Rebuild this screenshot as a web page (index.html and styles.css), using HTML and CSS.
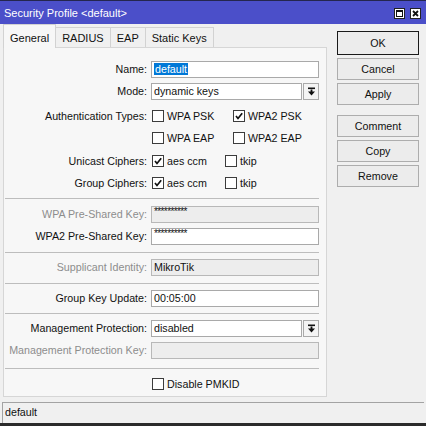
FILE: index.html
```html
<!DOCTYPE html>
<html>
<head>
<meta charset="utf-8">
<link rel="stylesheet" href="styles.css">
</head>
<body>
<div class="window">
  <div class="titlebar">
    <span class="title">Security Profile &lt;default&gt;</span>
    <div class="tb-buttons">
      <span class="tb-btn"><svg width="11" height="11" viewBox="0 0 11 11"><rect x="0.5" y="0.5" width="10" height="10" fill="#fff" stroke="#222"/><rect x="2.5" y="2.5" width="6" height="6" fill="none" stroke="#111"/><rect x="2" y="2" width="7" height="2" fill="#111"/></svg></span>
      <span class="tb-btn"><svg width="11" height="11" viewBox="0 0 11 11"><rect x="0.5" y="0.5" width="10" height="10" fill="#fff" stroke="#222"/><path d="M3 3 L8 8 M8 3 L3 8" stroke="#111" stroke-width="1.8"/></svg></span>
    </div>
  </div>
  <div class="main">
    <div class="left">
      <div class="tabs">
        <div class="tab active">General</div>
        <div class="tab">RADIUS</div>
        <div class="tab">EAP</div>
        <div class="tab">Static Keys</div>
      </div>
      <div class="panel">
        <div class="row">
          <div class="lbl">Name:</div>
          <div class="field"><div class="input"><span class="sel">default</span></div></div>
        </div>
        <div class="row">
          <div class="lbl">Mode:</div>
          <div class="field combo"><div class="input">dynamic keys</div><div class="dd"><svg width="9" height="9" viewBox="0 0 9 9"><rect x="1" y="0.5" width="7" height="1.6" fill="#111"/><rect x="3.6" y="2.5" width="1.8" height="3" fill="#111"/><path d="M1 4.5 H8 L4.5 8.5 Z" fill="#111"/></svg></div></div>
        </div>
        <div class="row r-auth1">
          <div class="lbl">Authentication Types:</div>
          <div class="field opts">
            <div class="opt wide"><span class="cb"></span>WPA PSK</div>
            <div class="opt wide"><span class="cb"><svg width="10" height="10" viewBox="0 0 10 10"><path d="M2 5 L4 7.5 L8.2 2.2" fill="none" stroke="#111" stroke-width="1.7"/></svg></span>WPA2 PSK</div>
          </div>
        </div>
        <div class="row r-auth2">
          <div class="lbl"></div>
          <div class="field opts">
            <div class="opt wide"><span class="cb"></span>WPA EAP</div>
            <div class="opt wide"><span class="cb"></span>WPA2 EAP</div>
          </div>
        </div>
        <div class="row r-uni">
          <div class="lbl">Unicast Ciphers:</div>
          <div class="field opts">
            <div class="opt"><span class="cb"><svg width="10" height="10" viewBox="0 0 10 10"><path d="M2 5 L4 7.5 L8.2 2.2" fill="none" stroke="#111" stroke-width="1.7"/></svg></span>aes ccm</div>
            <div class="opt"><span class="cb"></span>tkip</div>
          </div>
        </div>
        <div class="row">
          <div class="lbl">Group Ciphers:</div>
          <div class="field opts">
            <div class="opt"><span class="cb"><svg width="10" height="10" viewBox="0 0 10 10"><path d="M2 5 L4 7.5 L8.2 2.2" fill="none" stroke="#111" stroke-width="1.7"/></svg></span>aes ccm</div>
            <div class="opt"><span class="cb"></span>tkip</div>
          </div>
        </div>
        <div class="sep s1"></div>
        <div class="row r-wpa">
          <div class="lbl dim">WPA Pre-Shared Key:</div>
          <div class="field"><div class="input dis"><span class="stars">**********</span></div></div>
        </div>
        <div class="row">
          <div class="lbl">WPA2 Pre-Shared Key:</div>
          <div class="field"><div class="input"><span class="stars">**********</span></div></div>
        </div>
        <div class="sep s2"></div>
        <div class="row r-after">
          <div class="lbl dim">Supplicant Identity:</div>
          <div class="field"><div class="input dis">MikroTik</div></div>
        </div>
        <div class="sep s2"></div>
        <div class="row r-after">
          <div class="lbl">Group Key Update:</div>
          <div class="field"><div class="input">00:05:00</div></div>
        </div>
        <div class="sep s3"></div>
        <div class="row r-after">
          <div class="lbl">Management Protection:</div>
          <div class="field combo"><div class="input">disabled</div><div class="dd"><svg width="9" height="9" viewBox="0 0 9 9"><rect x="1" y="0.5" width="7" height="1.6" fill="#111"/><rect x="3.6" y="2.5" width="1.8" height="3" fill="#111"/><path d="M1 4.5 H8 L4.5 8.5 Z" fill="#111"/></svg></div></div>
        </div>
        <div class="row">
          <div class="lbl dim">Management Protection Key:</div>
          <div class="field"><div class="input dis"></div></div>
        </div>
        <div class="sep s4"></div>
        <div class="row r-pmkid">
          <div class="lbl"></div>
          <div class="field opts">
            <div class="opt"><span class="cb"></span>Disable PMKID</div>
          </div>
        </div>
      </div>
    </div>
    <div class="side">
      <div class="btn default">OK</div>
      <div class="btn">Cancel</div>
      <div class="btn">Apply</div>
      <div class="btn group">Comment</div>
      <div class="btn">Copy</div>
      <div class="btn">Remove</div>
    </div>
  </div>
  <div class="status">default</div>
</div>
</body>
</html>
```

FILE: styles.css
```css
* { box-sizing: border-box; }
html, body { margin: 0; padding: 0; }
body {
  width: 426px;
  height: 426px;
  overflow: hidden;
  background: #f0f0f0;
  font-family: "Liberation Sans", Arial, sans-serif;
  font-size: 10.7px;
  color: #111;
}
.window {
  width: 426px;
  height: 426px;
  display: flex;
  flex-direction: column;
  background: #f0f0f0;
  border-bottom: 3px solid #2b2b2b;
}
.titlebar {
  height: 24px;
  flex: none;
  background: #4b4fc9;
  border-top: 1px solid #24264f;
  display: flex;
  align-items: center;
  justify-content: space-between;
  padding: 0 5px 0 4px;
  color: #fff;
}
.title { font-size: 11px; }
.tb-buttons { display: flex; gap: 5px; padding-top: 2px; }
.tb-btn { display: block; width: 11px; height: 11px; }
.tb-btn svg { display: block; }

.main {
  display: flex;
  padding-left: 3px;
  flex: none;
}
.left { width: 324px; display: flex; flex-direction: column; }
.tabs {
  display: flex;
  height: 23px;
  align-items: flex-end;
}
.tab {
  height: 20px;
  border: 1px solid #d2d2d2;
  border-bottom: none;
  margin-right: -1px;
  padding: 2px 6px 0;
  line-height: 16px;
  background: #f0f0f0;
  font-size: 11px;
}
.tab.active {
  height: 24px;
  padding-top: 5px;
  margin-bottom: -1px;
  background: #f7f7f7;
  position: relative;
  z-index: 1;
}
.panel {
  border: 1px solid #d6d6d6;
  background: #f7f7f7;
  padding: 10px 0 1px 0;
}
.row {
  display: flex;
  align-items: center;
  height: 22px;
}
.r-auth1 { margin-top: 3px; }
.r-auth2 { height: 21px; }
.r-uni { margin-top: 2px; }
.r-wpa { margin-top: 4px; }
.r-after { margin-top: 3px; }
.r-pmkid { margin-top: 4px; }
.lbl {
  width: 143px;
  text-align: right;
  white-space: nowrap;
}
.lbl.dim { color: #8d8d8d; }
.field { margin-left: 4px; width: 168px; }
.input {
  width: 168px;
  height: 17px;
  border: 1px solid #a9a9a9;
  background: #fff;
  padding-left: 2px;
  line-height: 15px;
  white-space: nowrap;
  overflow: hidden;
}
.input.dis { background: #ededed; border-color: #b8b8b8; }
.sel { background: #0078d7; color: #fff; padding: 0 1px; }
.stars { font-size: 10px; letter-spacing: -0.6px; line-height: 10px; vertical-align: top; }
.combo { display: flex; gap: 1px; }
.combo .input { width: 151px; }
.dd {
  width: 16px;
  height: 17px;
  border: 1px solid #a9a9a9;
  background: #f4f4f4;
  display: flex;
  align-items: center;
  justify-content: center;
}
.dd svg { display: block; }
.opts { display: flex; align-items: center; }
.opt { display: flex; align-items: center; width: 73px; white-space: nowrap; }
.opt.wide { width: 81px; }
.cb {
  width: 12px;
  height: 12px;
  border: 1px solid #3c3c3c;
  background: #fff;
  margin: 0 3px 0 1px;
  display: flex;
  align-items: center;
  justify-content: center;
  flex: none;
}
.cb svg { display: block; }
.sep {
  border-top: 1px solid #bdbdbd;
  margin: 0 7px 0 1px;
}
.s1 { margin-top: 4px; }
.s2 { margin-top: 5px; }
.s3 { margin-top: 4px; }
.s4 { margin-top: 7px; }

.side {
  margin-left: 10px;
  width: 82px;
  padding-top: 7px;
  display: flex;
  flex-direction: column;
}
.btn {
  height: 22px;
  margin-top: 3px;
  border: 1px solid #adadad;
  background: #ececec;
  text-align: center;
  line-height: 20px;
}
.btn.default {
  height: 24px;
  margin-top: 0;
  border: 1px solid #1a1a1a;
  line-height: 22px;
}
.btn.group { margin-top: 10px; }

.status {
  margin: 5px 2px 0 2px;
  flex: 1;
  border-top: 1px solid #a3a3a3;
  border-left: 1px solid #a3a3a3;
  padding-left: 2px;
  line-height: 19px;
}
```
